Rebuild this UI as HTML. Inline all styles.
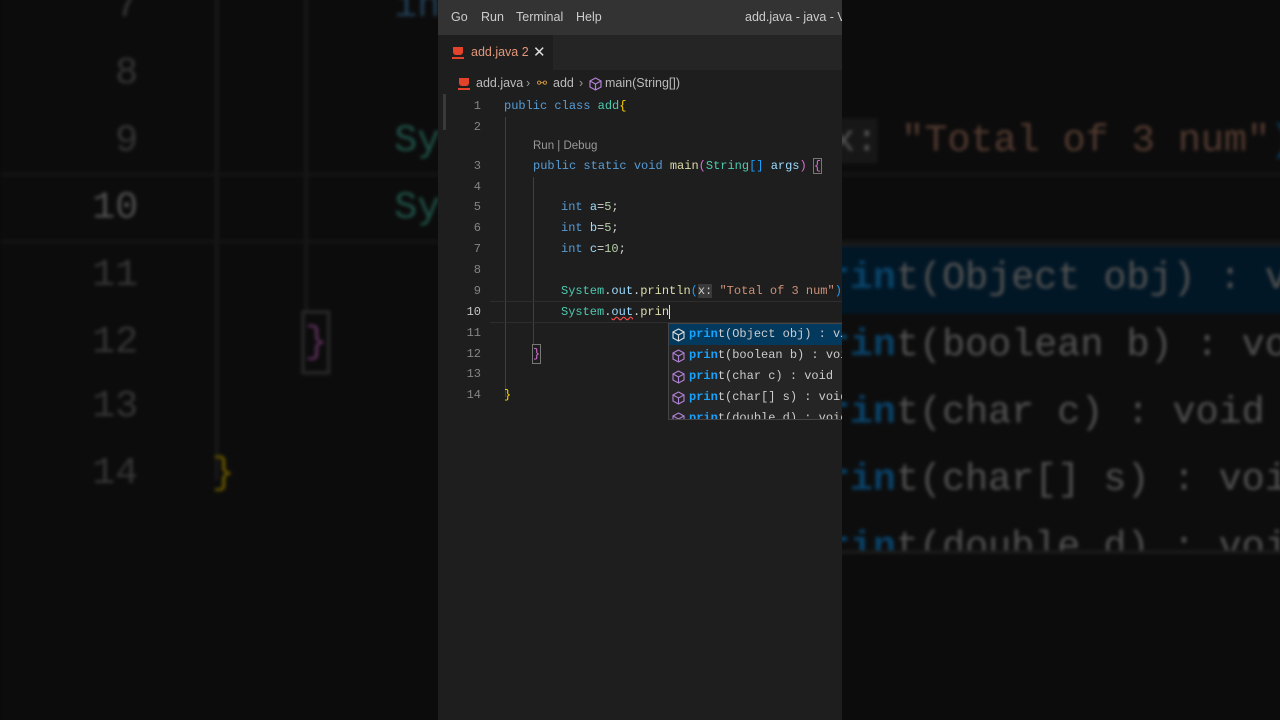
<!DOCTYPE html>
<html><head><meta charset="utf-8"><style>
*{margin:0;padding:0;box-sizing:border-box}
html,body{width:1280px;height:720px;overflow:hidden}
body{background:#0a0a0a;position:relative;font-family:"Liberation Sans",sans-serif}
#wrap{position:absolute;left:0;top:0;width:1280px;height:720px;overflow:hidden}
.ed{position:absolute;left:0;top:0;width:1280px;height:720px}
.bgl{transform-origin:0 0;transform:translate(-1401px,-790.4px) scale(3.2);filter:blur(0.6px) brightness(0.4)}
.center{position:absolute;left:438px;top:0;width:404px;height:720px;overflow:hidden}
.center .ed{left:-438px}
.edbg{position:absolute;left:438px;top:0;width:404px;height:720px;background:#1e1e1e}
.mono{font-family:"Liberation Mono","DejaVu Sans Mono",monospace;font-size:12px}
.ln{position:absolute;left:440px;width:41px;text-align:right;color:#858585;height:18px;line-height:18px}
.code{position:absolute;height:18px;line-height:18px;white-space:pre;color:#d4d4d4}
.k{color:#569cd6}.t{color:#4ec9b0}.y{color:#ffd700}.f{color:#dcdcaa}.v{color:#9cdcfe}.n{color:#b5cea8}.s{color:#ce9178}.p{color:#da70d6}.b{color:#179fff}
.guide{position:absolute;width:1px;background:#404040}
.menu{position:absolute;left:438px;top:0;width:404px;height:35px;background:#333;color:#ccc;font-size:12.5px}
.menu span{position:absolute;top:10px;white-space:nowrap}
.tabs{position:absolute;left:438px;top:35px;width:404px;height:35px;background:#252526}
.tab{position:absolute;left:0;top:0;width:115px;height:35px;background:#1e1e1e;color:#e2977a;font-size:12.5px}
.crumb{position:absolute;top:76px;color:#bbb;font-size:12.5px;white-space:nowrap}
.cup{position:absolute;width:10px;height:8px;background:#e2432a;border-radius:0 0 3px 3px}
.cup:after{content:"";position:absolute;left:-1px;top:10px;width:12px;height:2px;background:#e2432a}
.sug{position:absolute;left:668px;top:323px;width:200px;height:97px;background:#252526;border:1px solid #454545;overflow:hidden}
.row{position:absolute;left:0;width:200px;height:21px;line-height:21px;color:#ccc;white-space:pre}
.row .hl{color:#18a3ff;font-weight:bold}
.row svg{position:absolute;left:3px;top:4px}
.row .tx{position:absolute;left:20px}
</style></head><body><div id="wrap">

<div class="ed bgl">
 <div class="edbg"></div>
 <div class="mono">
  <div class="guide" style="left:505px;top:117px;height:280px"></div>
  <div class="guide" style="left:533px;top:177px;height:168px"></div>
  <div style="position:absolute;left:438px;top:301px;width:404px;height:22px;border-top:1px solid #333;border-bottom:1px solid #333"></div>
  <div class="ln" style="top:240px">7</div><div class="ln" style="top:261px">8</div><div class="ln" style="top:282px">9</div><div class="ln" style="top:303px;color:#c6c6c6">10</div><div class="ln" style="top:324px">11</div><div class="ln" style="top:345px">12</div><div class="ln" style="top:365px">13</div><div class="ln" style="top:386px">14</div>
  <div class="code" style="left:561px;top:240px"><span class="k">int</span> <span class="v">c</span>=<span class="n">10</span>;</div>
  <div class="code" style="left:561px;top:282px"><span class="t">System</span>.<span class="v">out</span>.<span class="f">println</span><span class="b">(</span><span style="background:#3a3a3a;color:#ccc">x:</span> <span class="s">"Total of 3 num"</span><span class="b">)</span>;</div>
  <div class="code" style="left:561px;top:303px"><span class="t">System</span>.<span class="v">out</span>.<span class="f">prin</span></div>
  <div class="code p" style="left:533px;top:345px;outline:1px solid #666">}</div>
  <div class="code y" style="left:504px;top:386px">}</div>
  <div class="sug" style="background:#202020">
   <div class="row" style="top:0;background:#04395e"><span class="tx"><span class="hl">prin</span>t(Object obj) : v…</span></div>
   <div class="row" style="top:21px"><span class="tx"><span class="hl">prin</span>t(boolean b) : void</span></div>
   <div class="row" style="top:42px"><span class="tx"><span class="hl">prin</span>t(char c) : void</span></div>
   <div class="row" style="top:63px"><span class="tx"><span class="hl">prin</span>t(char[] s) : void</span></div>
   <div class="row" style="top:84px"><span class="tx"><span class="hl">prin</span>t(double d) : void</span></div>
  </div>
 </div>
</div>

<div class="center"><div class="ed">
 <div class="edbg"></div>
 <div class="menu"><span style="left:13px">Go</span><span style="left:43px">Run</span><span style="left:78px">Terminal</span><span style="left:138px">Help</span><span style="left:307px">add.java - java - Visual Studio Code</span></div>
 <div class="tabs"><div class="tab">
  <div class="cup" style="left:15px;top:12px"></div>
  <span style="position:absolute;left:33px;top:10px">add.java 2</span>
  <span style="position:absolute;left:95px;top:8px;color:#ddd;font-size:15px">✕</span>
 </div></div>
 <div class="cup" style="left:459px;top:78px"></div>
 <div class="crumb" style="left:476px">add.java</div>
 <div class="crumb" style="left:526px;color:#999">›</div>
 <div class="crumb" style="left:537px;color:#e0a040;font-size:12px">⚯</div>
 <div class="crumb" style="left:553px">add</div>
 <div class="crumb" style="left:579px;color:#999">›</div>
 <svg style="position:absolute;left:589px;top:77px" width="13" height="14" viewBox="0 0 13 14"><path d="M6.5 1 L12 4 V10 L6.5 13 L1 10 V4 Z M1 4 L6.5 7 L12 4 M6.5 7 V13" fill="none" stroke="#b180d7" stroke-width="1.2"/></svg>
 <div class="crumb" style="left:605px">main(String[])</div>
 <div style="position:absolute;left:443px;top:94px;width:3px;height:36px;background:#3a3a3a"></div>
 <div class="mono">
  <div class="guide" style="left:505px;top:117px;height:280px"></div>
  <div class="guide" style="left:533px;top:177px;height:168px"></div>
  <div style="position:absolute;left:490px;top:301px;width:360px;height:22px;border-top:1px solid #2e2e2e;border-bottom:1px solid #2e2e2e"></div>
  <div class="ln" style="top:97px">1</div><div class="ln" style="top:118px">2</div><div class="ln" style="top:157px">3</div><div class="ln" style="top:178px">4</div><div class="ln" style="top:198px">5</div><div class="ln" style="top:219px">6</div><div class="ln" style="top:240px">7</div><div class="ln" style="top:261px">8</div><div class="ln" style="top:282px">9</div><div class="ln" style="top:303px;color:#c6c6c6">10</div><div class="ln" style="top:324px">11</div><div class="ln" style="top:345px">12</div><div class="ln" style="top:365px">13</div><div class="ln" style="top:386px">14</div>
  <div class="code" style="left:504px;top:97px"><span class="k">public</span> <span class="k">class</span> <span class="t">add</span><span class="y">{</span></div>
  <div style="position:absolute;left:533px;top:140px;font-family:'Liberation Sans',sans-serif;font-size:11.5px;color:#999">Run | Debug</div>
  <div class="code" style="left:533px;top:157px"><span class="k">public</span> <span class="k">static</span> <span class="k">void</span> <span class="f">main</span><span class="p">(</span><span class="t">String</span><span class="b">[]</span> <span class="v">args</span><span class="p">)</span> <span class="p" style="outline:1px solid #777">{</span></div>
  <div class="code" style="left:561px;top:198px"><span class="k">int</span> <span class="v">a</span>=<span class="n">5</span>;</div>
  <div class="code" style="left:561px;top:219px"><span class="k">int</span> <span class="v">b</span>=<span class="n">5</span>;</div>
  <div class="code" style="left:561px;top:240px"><span class="k">int</span> <span class="v">c</span>=<span class="n">10</span>;</div>
  <div class="code" style="left:561px;top:282px"><span class="t">System</span>.<span class="v">out</span>.<span class="f">println</span><span class="b">(</span><span style="background:#3a3a3a;color:#ccc">x:</span> <span class="s">"Total of 3 num"</span><span class="b">)</span>;</div>
  <div class="code" style="left:561px;top:303px"><span class="t">System</span>.<span class="v" style="text-decoration:underline wavy #f14c4c">out</span>.<span class="f">prin</span><span style="border-left:1px solid #ddd"></span></div>
  <div class="code p" style="left:533px;top:345px;outline:1px solid #777">}</div>
  <div class="code y" style="left:504px;top:386px">}</div>
  <div class="sug">
   <div class="row" style="top:0;background:#04395e"><svg width="13" height="14" viewBox="0 0 13 14"><path d="M6.5 1 L12 4 V10 L6.5 13 L1 10 V4 Z M1 4 L6.5 7 L12 4 M6.5 7 V13" fill="none" stroke="#ddd" stroke-width="1.1"/></svg><span class="tx"><span class="hl">prin</span>t(Object obj) : v…</span></div>
   <div class="row" style="top:21px"><svg width="13" height="14" viewBox="0 0 13 14"><path d="M6.5 1 L12 4 V10 L6.5 13 L1 10 V4 Z M1 4 L6.5 7 L12 4 M6.5 7 V13" fill="none" stroke="#b180d7" stroke-width="1.1"/></svg><span class="tx"><span class="hl">prin</span>t(boolean b) : void</span></div>
   <div class="row" style="top:42px"><svg width="13" height="14" viewBox="0 0 13 14"><path d="M6.5 1 L12 4 V10 L6.5 13 L1 10 V4 Z M1 4 L6.5 7 L12 4 M6.5 7 V13" fill="none" stroke="#b180d7" stroke-width="1.1"/></svg><span class="tx"><span class="hl">prin</span>t(char c) : void</span></div>
   <div class="row" style="top:63px"><svg width="13" height="14" viewBox="0 0 13 14"><path d="M6.5 1 L12 4 V10 L6.5 13 L1 10 V4 Z M1 4 L6.5 7 L12 4 M6.5 7 V13" fill="none" stroke="#b180d7" stroke-width="1.1"/></svg><span class="tx"><span class="hl">prin</span>t(char[] s) : void</span></div>
   <div class="row" style="top:84px"><svg width="13" height="14" viewBox="0 0 13 14"><path d="M6.5 1 L12 4 V10 L6.5 13 L1 10 V4 Z M1 4 L6.5 7 L12 4 M6.5 7 V13" fill="none" stroke="#b180d7" stroke-width="1.1"/></svg><span class="tx"><span class="hl">prin</span>t(double d) : void</span></div>
  </div>
 </div>
</div></div>
</div></body></html>
